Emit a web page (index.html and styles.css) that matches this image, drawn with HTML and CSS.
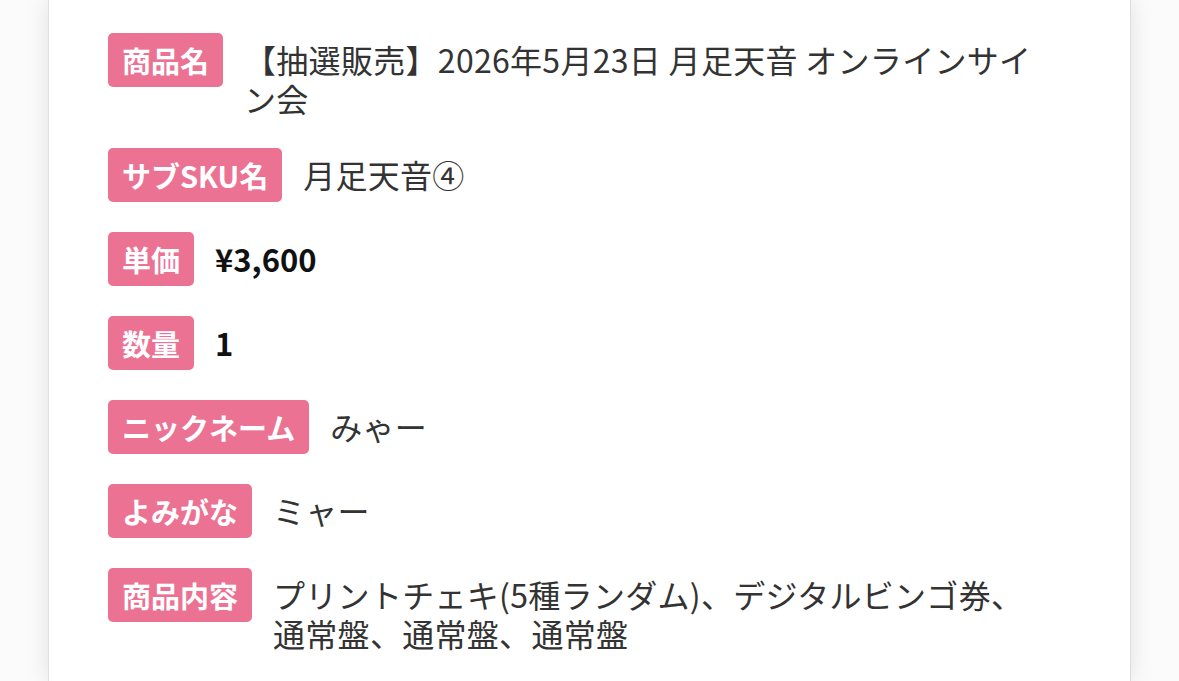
FILE: index.html
```html
<!DOCTYPE html>
<html lang="ja">
<head>
<meta charset="utf-8">
<title>注文内容</title>
<link rel="stylesheet" href="styles.css">
</head>
<body>
<div class="card">
  <div class="rows">
    <div class="row">
      <span class="label">商品名</span>
      <span class="value">【抽選販売】2026年5月23日 月足天音 オンラインサイン会</span>
    </div>
    <div class="row">
      <span class="label">サブSKU名</span>
      <span class="value">月足天音④</span>
    </div>
    <div class="row">
      <span class="label">単価</span>
      <span class="value strong">¥3,600</span>
    </div>
    <div class="row">
      <span class="label">数量</span>
      <span class="value strong">1</span>
    </div>
    <div class="row">
      <span class="label">ニックネーム</span>
      <span class="value">みゃー</span>
    </div>
    <div class="row">
      <span class="label">よみがな</span>
      <span class="value">ミャー</span>
    </div>
    <div class="row">
      <span class="label">商品内容</span>
      <span class="value">プリントチェキ(5種ランダム)、デジタルビンゴ券、通常盤、通常盤、通常盤</span>
    </div>
  </div>
</div>
</body>
</html>
```

FILE: styles.css
```css
html, body {
  margin: 0;
  padding: 0;
  background: #fbfbfb;
  height: 100%;
  overflow: hidden;
}

body {
  font-family: "Noto Sans CJK JP", "Noto Sans", sans-serif;
}

.card {
  margin: 0 48px;
  min-height: 100%;
  background: #ffffff;
  box-shadow: 0 0 22px rgba(0, 0, 0, 0.11);
  border-left: 1px solid #e2e2e2;
  border-right: 1px solid #dcdcdc;
  box-sizing: border-box;
  padding: 33px 95px 0 59px;
}

.rows {
  display: flex;
  flex-direction: column;
  gap: 30px;
}

.row {
  display: flex;
  align-items: flex-start;
  gap: 21px;
}

.label {
  flex: none;
  background: #ec7294;
  color: #ffffff;
  font-weight: 700;
  font-size: 29px;
  line-height: 40px;
  padding: 7px 14px;
  border-radius: 5px;
}

.value {
  flex: 1;
  min-width: 0;
  padding-top: 7px;
  font-size: 32px;
  line-height: 39px;
  color: #333333;
  letter-spacing: 0.3px;
}

.value.strong {
  font-weight: 700;
  color: #111111;
  font-size: 31px;
  letter-spacing: 0;
}
```
